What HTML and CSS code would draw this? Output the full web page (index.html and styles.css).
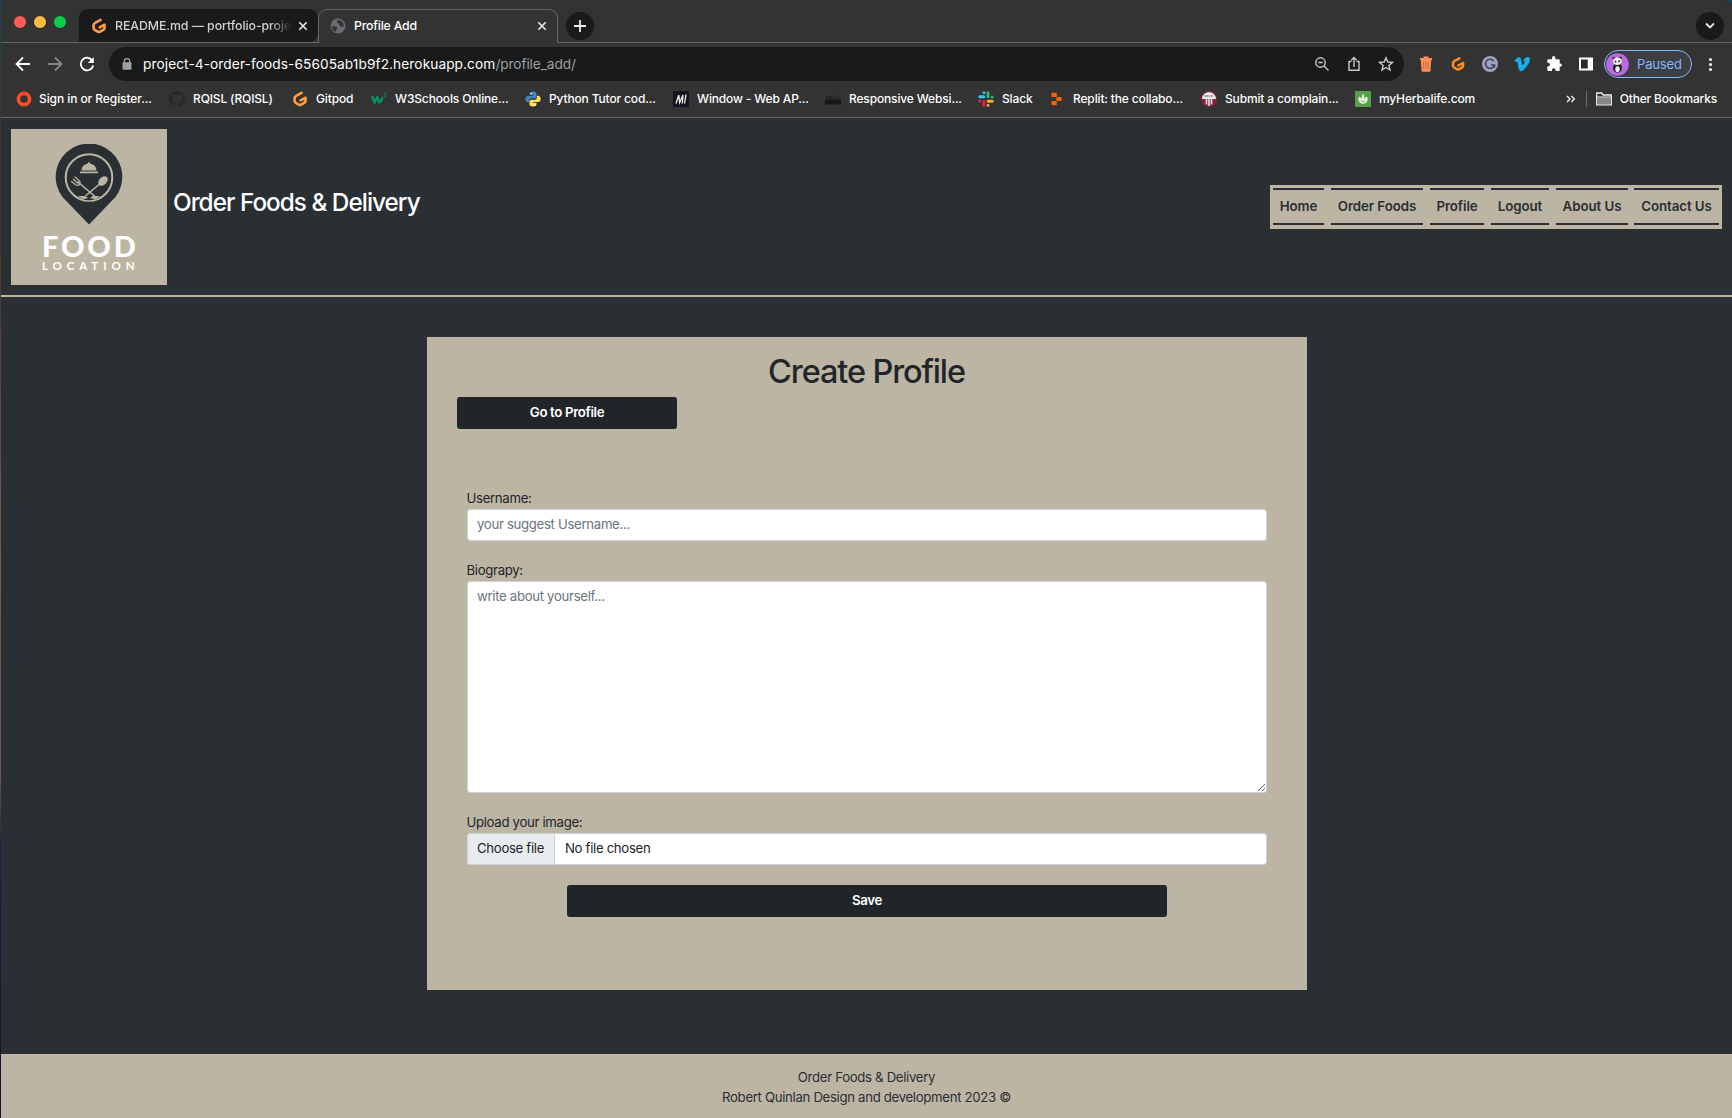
FILE: index.html
```
<!DOCTYPE html>
<html lang="en">
<head>
<meta charset="utf-8">
<title>Profile Add</title>
<link rel="stylesheet" href="styles.css">
</head>
<body>
<svg class="defs" width="0" height="0">
  <symbol id="gitpod" viewBox="0 0 16 16"><path d="M9.600 1.900 4.200 4.900Q2.600 5.700 2.600 7.200v2.600q0 1.300 1.100 2l3 1.800q1.200.7 2.500 0l3-1.700q1.300-.8 1.300-2.200V6.800L8.600 9.400" fill="none" stroke="#ff9a40" stroke-width="2.700" stroke-linecap="round" stroke-linejoin="round"/></symbol>
</svg>
<div class="window">
  <div class="tabstrip">
    <div class="lights"><i class="red"></i><i class="amber"></i><i class="green"></i></div>
    <div class="tab">
      <svg class="ico"><use href="#gitpod"/></svg>
      <span class="tab-title faded">README.md — portfolio-projec</span>
      <svg class="close" viewBox="0 0 10 10"><path d="M1.300 1.300l7.400 7.400M8.700 1.300 1.300 8.700"/></svg>
    </div>
    <div class="tab active">
      <svg class="ico" viewBox="0 0 16 16"><circle cx="8" cy="8" r="7.400" fill="#6a6d72"/><path d="M1.800 8.200l4 .3q1.800.3 1.500 1.800l-1 .8v2l-.9.700Q2 12.500 1.800 8.200zM7.500 2.300 6.800 4.200q.2 1 1.700 1l1 1.600q-.2 1.400 1.300 1.700l2.900.2Q14 3.500 9.500 2z" fill="#333"/></svg>
      <span class="tab-title">Profile Add</span>
      <svg class="close" viewBox="0 0 10 10"><path d="M1.300 1.300l7.400 7.400M8.700 1.300 1.300 8.700"/></svg>
    </div>
    <div class="round"><svg width="12" height="12" viewBox="0 0 12 12"><path d="M6 0v12M0 6h12"/></svg></div>
    <div class="round last"><svg width="10" height="8" viewBox="0 0 10 8"><path d="M1 1.500l4 4 4-4"/></svg></div>
  </div>
  <div class="toolbar">
    <svg class="nav-ico" viewBox="0 0 16 16"><path d="M15 8H2M8 1.500 1.500 8 8 14.500"/></svg>
    <svg class="nav-ico dim" viewBox="0 0 16 16"><path d="M1 8h13M8 1.500 14.500 8 8 14.500"/></svg>
    <svg class="nav-ico" viewBox="0 0 16 16"><path d="M13.300 4.500A6.300 6.300 0 1 0 14.200 9.500"/><path d="M14.800 1v6H8.800z" class="solid"/></svg>
    <div class="omnibox">
      <svg class="lock" viewBox="0 0 10 12"><path d="M2.300 5V3.200a2.700 2.700 0 0 1 5.400 0V5" fill="none" stroke="#9aa0a6" stroke-width="1.300"/><rect x=".5" y="4.300" width="9" height="7.500" rx="1" fill="#9aa0a6"/></svg>
      <span class="url">project-4-order-foods-65605ab1b9f2.herokuapp.com<span class="path">/profile_add/</span></span>
      <div class="omni-icons">
        <svg viewBox="0 0 16 16"><circle cx="6.500" cy="6.500" r="4.700"/><path d="M10 10l4.500 4.500M4.300 6.500h4.400"/></svg>
        <svg viewBox="0 0 16 16"><path d="M5.500 5.500H3v8.800h10V5.500h-2.500M8 11V1.800M5.300 4.300 8 1.600l2.700 2.700"/></svg>
        <svg viewBox="0 0 16 16"><path d="M8 1.800 9.800 6l4.700.4-3.600 3 1.100 4.600L8 11.500 4 14l1.100-4.600-3.600-3L6.200 6z"/></svg>
      </div>
    </div>
    <div class="exts">
      <svg viewBox="0 0 16 16"><path d="M5.500 2V.6h5V2H14v2H2V2zM2.700 4h10.600l-1 11.700H3.700z" fill="#ff8f5a"/><path d="M5.600 5.800l.3 7.500M8 5.800v7.500M10.400 5.800l-.3 7.500" stroke="#c96a3d" stroke-width="1"/></svg>
      <svg viewBox="0 0 16 16"><path d="M9.400 2.300 4.500 5Q3 5.900 3 7.500v1.900q0 1.400 1.100 2.100l2.700 1.600q1.200.6 2.400 0l2.700-1.500q1.200-.8 1.200-2.200V7L8.300 9.500" fill="none" stroke="#ff8f20" stroke-width="2.500" stroke-linecap="round" stroke-linejoin="round"/></svg>
      <svg viewBox="0 0 16 16"><circle cx="8" cy="8" r="8" fill="#9da1be"/><path d="M11.700 5.200A4.500 4.500 0 1 0 12.400 9H9M12.500 8.800v3" fill="none" stroke="#3f4258" stroke-width="1.500"/></svg>
      <svg viewBox="0 0 16 16"><path d="M.3 4.600C2 3 3.700 1.400 4.900 1.300c1.300-.1 2 .8 2.400 2.600.4 2 .8 5 1.400 5.100.5 0 1.900-2.200 2-3.100.1-1-.8-1-1.500-.7C10 2.400 11.700 1 13.900 1c1.600.1 2.200 1.200 2 2.800-.5 4.100-6.100 11.400-8.700 11.400-2.900 0-3.100-7.300-4-9.300-.3-.7-1.300-.4-2 .1z" fill="#17aeea"/></svg>
      <svg viewBox="0 0 16 16"><path d="M6 1.800a1.700 1.700 0 0 1 3.400 0V3.200h3.300q1 0 1 1V7.400h.5a1.700 1.700 0 0 1 0 3.400h-.5V14q0 1-1 1H9.600v-.9a1.800 1.800 0 0 0-3.600 0V15H2.300q-1 0-1-1v-3.600h.9a1.800 1.800 0 0 0 0-3.600h-.9V4.200q0-1 1-1H6z" fill="#fff"/></svg>
      <svg viewBox="0 0 16 16"><path d="M1 1.500h14v13H1z" fill="#fff"/><path d="M3 3.500h6.700v9H3z" fill="#28292b"/></svg>
    </div>
    <div class="profile">
      <svg viewBox="0 0 24 24"><circle cx="12" cy="12" r="11.800" fill="#b96ce0"/><ellipse cx="12" cy="15.500" rx="4.700" ry="5" fill="#222"/><ellipse cx="12" cy="17" rx="2.300" ry="3.200" fill="#eee"/><circle cx="8.300" cy="5.800" r="1.500" fill="#222"/><circle cx="15" cy="5.300" r="1.500" fill="#222"/><ellipse cx="11.800" cy="8.600" rx="4.500" ry="3.900" fill="#eee"/><circle cx="9.900" cy="9" r="1" fill="#222"/><circle cx="13.700" cy="8.500" r="1" fill="#222"/></svg>
      <span>Paused</span>
    </div>
    <div class="kebab"><i></i><i></i><i></i></div>
  </div>
  <div class="bookmarks">
    <div class="bm w1"><svg class="ico" viewBox="0 0 16 16"><circle cx="8" cy="8" r="5.600" fill="none" stroke="#ff4b2b" stroke-width="3.600"/></svg>Sign in or Register...</div>
    <div class="bm w2"><svg class="ico" viewBox="0 0 16 16"><path fill="#24292e" d="M8 0C3.580 0 0 3.580 0 8c0 3.540 2.290 6.530 5.470 7.590.4.070.55-.17.55-.38 0-.19-.01-.82-.01-1.490-2.010.37-2.530-.49-2.690-.94-.09-.23-.48-.94-.82-1.130-.28-.15-.68-.52-.01-.53.63-.01 1.080.58 1.230.82.72 1.210 1.870.87 2.330.66.07-.52.28-.87.51-1.070-1.780-.2-3.640-.89-3.640-3.950 0-.87.31-1.590.82-2.150-.08-.2-.36-1.020.08-2.120 0 0 .67-.21 2.200.82.64-.18 1.320-.27 2-.27s1.360.09 2 .27c1.530-1.040 2.200-.82 2.200-.82.44 1.100.16 1.920.08 2.120.51.56.82 1.270.82 2.150 0 3.070-1.870 3.750-3.650 3.950.29.25.54.73.54 1.480 0 1.070-.01 1.930-.01 2.200 0 .21.15.46.55.38A8.010 8.010 0 0 0 16 8c0-4.420-3.580-8-8-8z"/></svg>RQISL (RQISL)</div>
    <div class="bm w3"><svg class="ico"><use href="#gitpod"/></svg>Gitpod</div>
    <div class="bm w4"><svg class="ico" viewBox="0 0 16 16"><path d="M1 5 3.600 11.500 6.300 6 8.300 11.500 10.500 9.500 11.500 6" fill="none" stroke="#04966a" stroke-width="2.300" stroke-linejoin="round"/><path d="M12.800 2.300h2L14 3.800c1.600.2 1.200 2.200-.9 1.700" fill="none" stroke="#04966a" stroke-width=".7"/></svg>W3Schools Online...</div>
    <div class="bm w5"><svg class="ico" viewBox="0 0 16 16"><path d="M7.900.5C5.200.5 4.500 1.500 4.500 2.700v1.600H8v.6H2.700C1.200 4.900.4 6.200.4 8s.8 3.300 2.300 3.300h1.400V9.500c0-1.400 1.100-2.300 2.400-2.300h3.200c1 0 1.800-.8 1.800-1.800V2.700C11.500 1.200 10.100.5 7.900.5z" fill="#4584b6"/><circle cx="6.100" cy="2.500" r=".7" fill="#fff"/><path d="M8.100 15.500c2.700 0 3.400-1 3.400-2.200v-1.600H8v-.6h5.300c1.500 0 2.300-1.300 2.300-3.100s-.8-3.300-2.300-3.300h-1.400v1.800c0 1.400-1.100 2.300-2.400 2.300H6.300c-1 0-1.800.8-1.800 1.800v2.700c0 1.500 1.400 2.200 3.600 2.200z" fill="#ffde57"/><circle cx="9.900" cy="13.500" r=".7" fill="#fff"/></svg>Python Tutor cod...</div>
    <div class="bm w6"><svg class="ico" viewBox="0 0 16 16"><path d="M0 0h16v16H0z" fill="#15151d"/><path d="M3 12.500 5.800 4 6.600 11.500 10 4 9.300 12.500M13 3.500l-1.500 9" fill="none" stroke="#eee" stroke-width="1.300"/></svg>Window - Web AP...</div>
    <div class="bm w7"><svg class="ico" viewBox="0 0 16 16"><path d="M0 8.500h16v5H0z" fill="#171717"/><path d="M1.500 8V5.800h2V8M5 5.800h2.500v2H5zM9.500 7.800V5.800M11 7.800h2v-3" fill="none" stroke="#222" stroke-width="1.200"/></svg>Responsive Websi...</div>
    <div class="bm w8"><svg class="ico" viewBox="0 0 16 16" fill="none" stroke-width="3" stroke-linecap="round"><path d="M1.800 5.800h4M6 1.700v.1" stroke="#36c5f0"/><path d="M10 1.800v4M14.100 6h.1" stroke="#2eb67d"/><path d="M10.200 10.200h4M10 14.200v.1" stroke="#ecb22e"/><path d="M6 10.200v4M1.800 10.100h.1" stroke="#e01e5a"/></svg>Slack</div>
    <div class="bm w9"><svg class="ico" viewBox="0 0 16 16" fill="#f26207"><rect x="2.500" y="1.800" width="5.300" height="4.200" rx=".8"/><rect x="7.300" y="6" width="5.300" height="4" rx=".8"/><rect x="2.500" y="10" width="5.300" height="4.200" rx=".8"/></svg>Replit: the collabo...</div>
    <div class="bm w10"><svg class="ico" viewBox="0 0 16 16"><circle cx="8" cy="8" r="7.400" fill="#8a1f3d" stroke="#8a1f3d" stroke-width="1.200"/><path d="M1 8C1.500-1 14.500-1 15 8z" fill="#eee"/><path d="M5.500 8v5.500M8 8v7M10.500 8v5.500" stroke="#ddd" stroke-width="1.700"/><path d="M3.500 5h9" stroke="#777" stroke-width="1.400" stroke-dasharray="1.500 .7"/></svg>Submit a complain...</div>
    <div class="bm w11"><svg class="ico" viewBox="0 0 16 16"><path d="M0 0h16v16H0z" fill="#56a04c"/><circle cx="8" cy="8.300" r="4.700" fill="#dff2d8"/><path d="M4 3h8v2.200q-3 1-3.300 3.800H7.300Q7 6.200 4 5.200z" fill="#56a04c"/><path d="M8 2.500 9 5v6.500H7V5z" fill="#eef8ea"/><path d="M6.500 9.500 8 11.500 9.500 9.500" fill="none" stroke="#56a04c" stroke-width=".9"/></svg>myHerbalife.com</div>
    <div class="other">
      <svg width="10" height="8" viewBox="0 0 10 8"><path d="M1 1l3 3-3 3M5.300 1l3 3-3 3" fill="none" stroke="#eee" stroke-width="1.400"/></svg>
      <span class="sep"></span>
      <svg class="ico folder" viewBox="0 0 16 16"><path d="M.7 13.800V2h5l1.500 2h8.100v9.800z" fill="none" stroke="#eee" stroke-width="1.300"/><path d="M1.300 6.500h13.400v6.700H1.300z" fill="#85868a"/><path d="M.7 6h14.600" stroke="#eee"/></svg>
      Other Bookmarks
    </div>
  </div>
  <header class="site-header">
    <div class="brand">
      <div class="logo">
        <svg width="68" height="82" viewBox="0 0 68 82">
          <path d="M34 80.500 7.500 53A33.300 33.300 0 1 1 60.500 53z" fill="#2a2f33"/>
          <circle cx="34" cy="33.500" r="23.300" fill="none" stroke="#bcb5a4" stroke-width="2"/>
          <path d="M26.500 26.500a7.500 7 0 0 1 15 0z" fill="#bcb5a4"/><circle cx="34" cy="19.500" r="1.200" fill="#bcb5a4"/>
          <path d="M25 28.400h18" stroke="#bcb5a4" stroke-width="1.600"/>
          <path d="M23 52h7l4 2.500 4-2.500h7Q34 60.500 23 52z" fill="#bcb5a4"/>
          <path d="M28 55.500q6-3 12 0q-6 1.500-12 0z" fill="#2a2f33"/>
          <path d="M23 38 40 52.500M44 40.500 31 51.500" stroke="#bcb5a4" stroke-width="1.600" stroke-linecap="round"/>
          <ellipse cx="48" cy="37" rx="5.600" ry="3.800" transform="rotate(-45 48 37)" fill="#bcb5a4"/>
          <path d="M16.500 37.500l4.500 3.500q3 1 4-1.500.5-1.500-.5-2.500L20 33M18.300 35.300l4.500 4" fill="none" stroke="#bcb5a4" stroke-width="1.200" stroke-linecap="round"/>
        </svg>
        <div class="logo-food">FOOD</div>
        <div class="logo-loc">LOCATION</div>
      </div>
      <h1>Order Foods &amp; Delivery</h1>
    </div>
    <nav>
      <a class="n1">Home</a><a class="n2">Order Foods</a><a class="n3">Profile</a><a class="n4">Logout</a><a class="n5">About Us</a><a class="n6">Contact Us</a>
    </nav>
  </header>
  <main>
    <section class="card">
      <h2>Create Profile</h2>
      <a class="btn go">Go to Profile</a>
      <form>
        <label>Username:</label>
        <input class="control" type="text" placeholder="your suggest Username...">
        <label>Biograpy:</label>
        <textarea class="control" placeholder="write about yourself..."></textarea>
        <label>Upload your image:</label>
        <div class="control file"><span class="choose">Choose file</span><span class="chosen">No file chosen</span></div>
      </form>
      <a class="btn save">Save</a>
    </section>
  </main>
  <footer>
    <p>Order Foods &amp; Delivery</p>
    <p>Robert Quinlan Design and development 2023 ©</p>
  </footer>
</div>
</body>
</html>
```
FILE: styles.css
```
* { box-sizing: border-box; }
html, body { margin: 0; height: 1118px; overflow: hidden; }
body {
  font-family: Inter, "Liberation Sans", sans-serif;
  font-size: 13.2px;
  letter-spacing: -.32px;
  background: linear-gradient(#1d4254 0, #1d4254 55px, #4a3431 90px, #4a3431 240px, #7a5c4c 560px, #6d5348 780px, #1b1c4c 850px, #15162c 1118px);
  padding-left: 1px;
}
h1, h2, p { margin: 0; font-weight: 400; }
svg { display: block; flex: none; }
.defs { position: absolute; }
.window { height: 1118px; display: flex; flex-direction: column; background: #2a2f33; color: #212529; border-top-left-radius: 6px; border-top-right-radius: 6px; overflow: hidden; }
.ico { width: 16px; height: 16px; }

/* browser chrome */
.tabstrip { height: 43px; flex: none; display: flex; align-items: flex-start; background: #333; box-shadow: inset 0 -1px #64666a; color: #fff; padding-right: 8px; }
.lights { display: flex; gap: 8px; padding: 16px 12px 0 13px; width: 78px; }
.lights i { width: 12px; height: 12px; border-radius: 50%; }
.red { background: #ff5b57; }
.amber { background: #ffbc40; }
.green { background: #0ccd4b; }
.tab { width: 239px; height: 33px; margin-top: 9px; border-radius: 9px 9px 9px 0; background: #1a1a1a; display: flex; align-items: center; padding: 0 10px 0 12px; font-size: 12.3px; font-weight: 500; letter-spacing: -.1px; }
.tab.active { background: #333; width: 240px; height: 34px; border: 1px solid #64666a; border-bottom: 0; border-radius: 9px 9px 0 0; padding: 0 10px 2px 11px; letter-spacing: -.2px; }
.tab-title { flex: 1; margin-left: 8px; white-space: nowrap; }
.faded { color: #d0d1d2; margin-right: 7px; width: 176px; flex: none; letter-spacing: -.05px; -webkit-mask-image: linear-gradient(90deg, #000 155px, transparent 177px); mask-image: linear-gradient(90deg, #000 155px, transparent 177px); }
.close { width: 10px; height: 10px; stroke: #e8eaed; stroke-width: 1.6; fill: none; }
.round { width: 28px; height: 28px; border-radius: 50%; background: #1a1a1a; display: flex; align-items: center; justify-content: center; margin: 12px 0 0 8px; }
.round.last { margin-left: auto; }
.round path { fill: none; stroke: #e8eaed; stroke-width: 1.8; }
.toolbar { height: 42px; flex: none; display: flex; align-items: center; background: #333; padding-left: 14px; }
.nav-ico { width: 16px; height: 16px; margin-right: 16px; fill: none; stroke: #fff; stroke-width: 1.8; }
.nav-ico.dim { stroke: #85868a; }
.nav-ico .solid { fill: #fff; stroke: none; }
.omnibox { width: 1295px; height: 34px; border-radius: 17px; background: #1a1a1a; display: flex; align-items: center; padding: 0 10px 0 13px; margin-left: -2px; color: #fff; }
.lock { width: 10px; height: 12px; }
.url { margin-left: 11px; font-size: 13.7px; letter-spacing: .08px; }
.path { color: #9aa0a6; letter-spacing: -.1px; }
.omni-icons { margin-left: auto; display: flex; gap: 16px; }
.omni-icons svg { width: 16px; height: 16px; fill: none; stroke: #c7c9cc; stroke-width: 1.4; }
.exts { display: flex; gap: 16px; margin-left: 14px; }
.exts svg { width: 16px; height: 16px; }
.profile { display: flex; align-items: center; width: 88px; height: 28px; margin-left: 10px; border: 1px solid #8ab4f8; border-radius: 14px; background: #3b3e43; color: #8ab4f8; font-size: 13px; letter-spacing: -.15px; padding-left: 1px; }
.profile svg { width: 23px; height: 23px; }
.profile span { margin-left: 8px; }
.kebab { display: flex; flex-direction: column; gap: 2px; margin-left: 17px; }
.kebab i { width: 3px; height: 3px; border-radius: 50%; background: #fff; }
.bookmarks { height: 33px; flex: none; background: #333; border-bottom: 1px solid #64666a; display: flex; padding: 6px 15px 0 15px; color: #fff; font-size: 12px; font-weight: 500; letter-spacing: -.15px; line-height: 15px; white-space: nowrap; }
.bm { display: flex; height: 16px; gap: 8px; flex: none; }
.w1 { width: 153px; gap: 7px; letter-spacing: -.08px; } .w2 { width: 123px; } .w3 { width: 79px; } .w4 { width: 154px; }
.w5 { width: 148px; } .w6 { width: 152px; } .w7 { width: 153px; } .w8 { width: 71px; }
.w9 { width: 152px; } .w10 { width: 154px; } .w11 { width: 120px; }
.other { margin-left: auto; display: flex; height: 16px; letter-spacing: -.18px; }
.other > svg:first-child { margin-top: 4px; }
.sep { width: 1px; height: 16px; background: #6b6d70; margin: 0 9px 0 10px; }
.folder { margin-right: 8px; }

/* page header */
.site-header { height: 179px; flex: none; border-bottom: 2px solid #bcb5a4; display: flex; justify-content: space-between; padding: 11px 10px 0; }
.brand { display: flex; }
.logo { width: 156px; height: 156px; background: #bcb5a4; color: #fff; padding: 15px 31px 0; display: flex; flex-direction: column; align-items: center; font-family: Lato, sans-serif; white-space: nowrap; }
.logo-food { width: 94px; height: 24px; margin-top: 8px; font-size: 29px; line-height: 24px; font-weight: 900; letter-spacing: 2.8px; }
.logo-loc { width: 94px; height: 12px; margin-top: 2px; font-size: 11.5px; line-height: 12px; font-weight: 700; letter-spacing: 4.9px; }
h1 { color: #fff; font-size: 24.3px; line-height: 30px; font-weight: 500; letter-spacing: -.97px; margin: 58px 0 0 6px; }
nav { height: 44px; width: 452px; margin-top: 56px; background: #bcb5a4; padding: 3px; display: flex; gap: 7px; }
nav a { height: 37px; border-top: 2px solid #2a2f33; border-bottom: 2px solid #2a2f33; color: #2a2f33; font-size: 13.3px; font-weight: 600; line-height: 33px; text-align: center; letter-spacing: -.07px; white-space: nowrap; }
.n1 { width: 51px; } .n2 { width: 92px; } .n3 { width: 54px; } .n4 { width: 58px; } .n5 { width: 72px; } .n6 { width: 85px; margin-left: -1px; }

/* profile form */
main { flex: 1; padding: 40px 0 0 426px; }
.card { width: 880px; height: 653px; background: #bcb5a4; display: flex; flex-direction: column; }
h2 { text-align: center; font-size: 32.5px; line-height: 40px; font-weight: 500; letter-spacing: -1.12px; padding: 15px 1px 0 0; height: 60px; }
.btn { display: block; height: 32px; border-radius: 3px; background: #212529; color: #fff; font-size: 13.3px; font-weight: 600; line-height: 31px; text-align: center; letter-spacing: -.37px; }
.go { width: 220px; margin-left: 30px; }
form { margin: 59px 40px 0; display: flex; flex-direction: column; }
label { height: 21px; line-height: 20px; margin-left: -.5px; }
.control { display: block; width: 100%; margin: 0 0 19px; height: 32px; border: 1px solid #ced4da; border-radius: 3.5px; background: #fff; padding: 0 10px 2px 9px; font: inherit; letter-spacing: -.32px; color: #212529; }
.control::placeholder { color: #6c757d; opacity: 1; }
textarea.control { height: 212px; padding-top: 6px; resize: vertical; }
.file { display: flex; padding: 0; overflow: hidden; margin-bottom: 20px; line-height: 28px; }
.choose { height: 30px; width: 87px; margin-right: 10px; padding-left: 9px; background: #e9ecef; border-right: 1px solid #ced4da; }
.save { width: 600px; margin: 0 auto; }
footer { height: 64px; flex: none; background: #bcb5a4; color: #2a2f33; text-align: center; padding-top: 13px; line-height: 20px; }
```
